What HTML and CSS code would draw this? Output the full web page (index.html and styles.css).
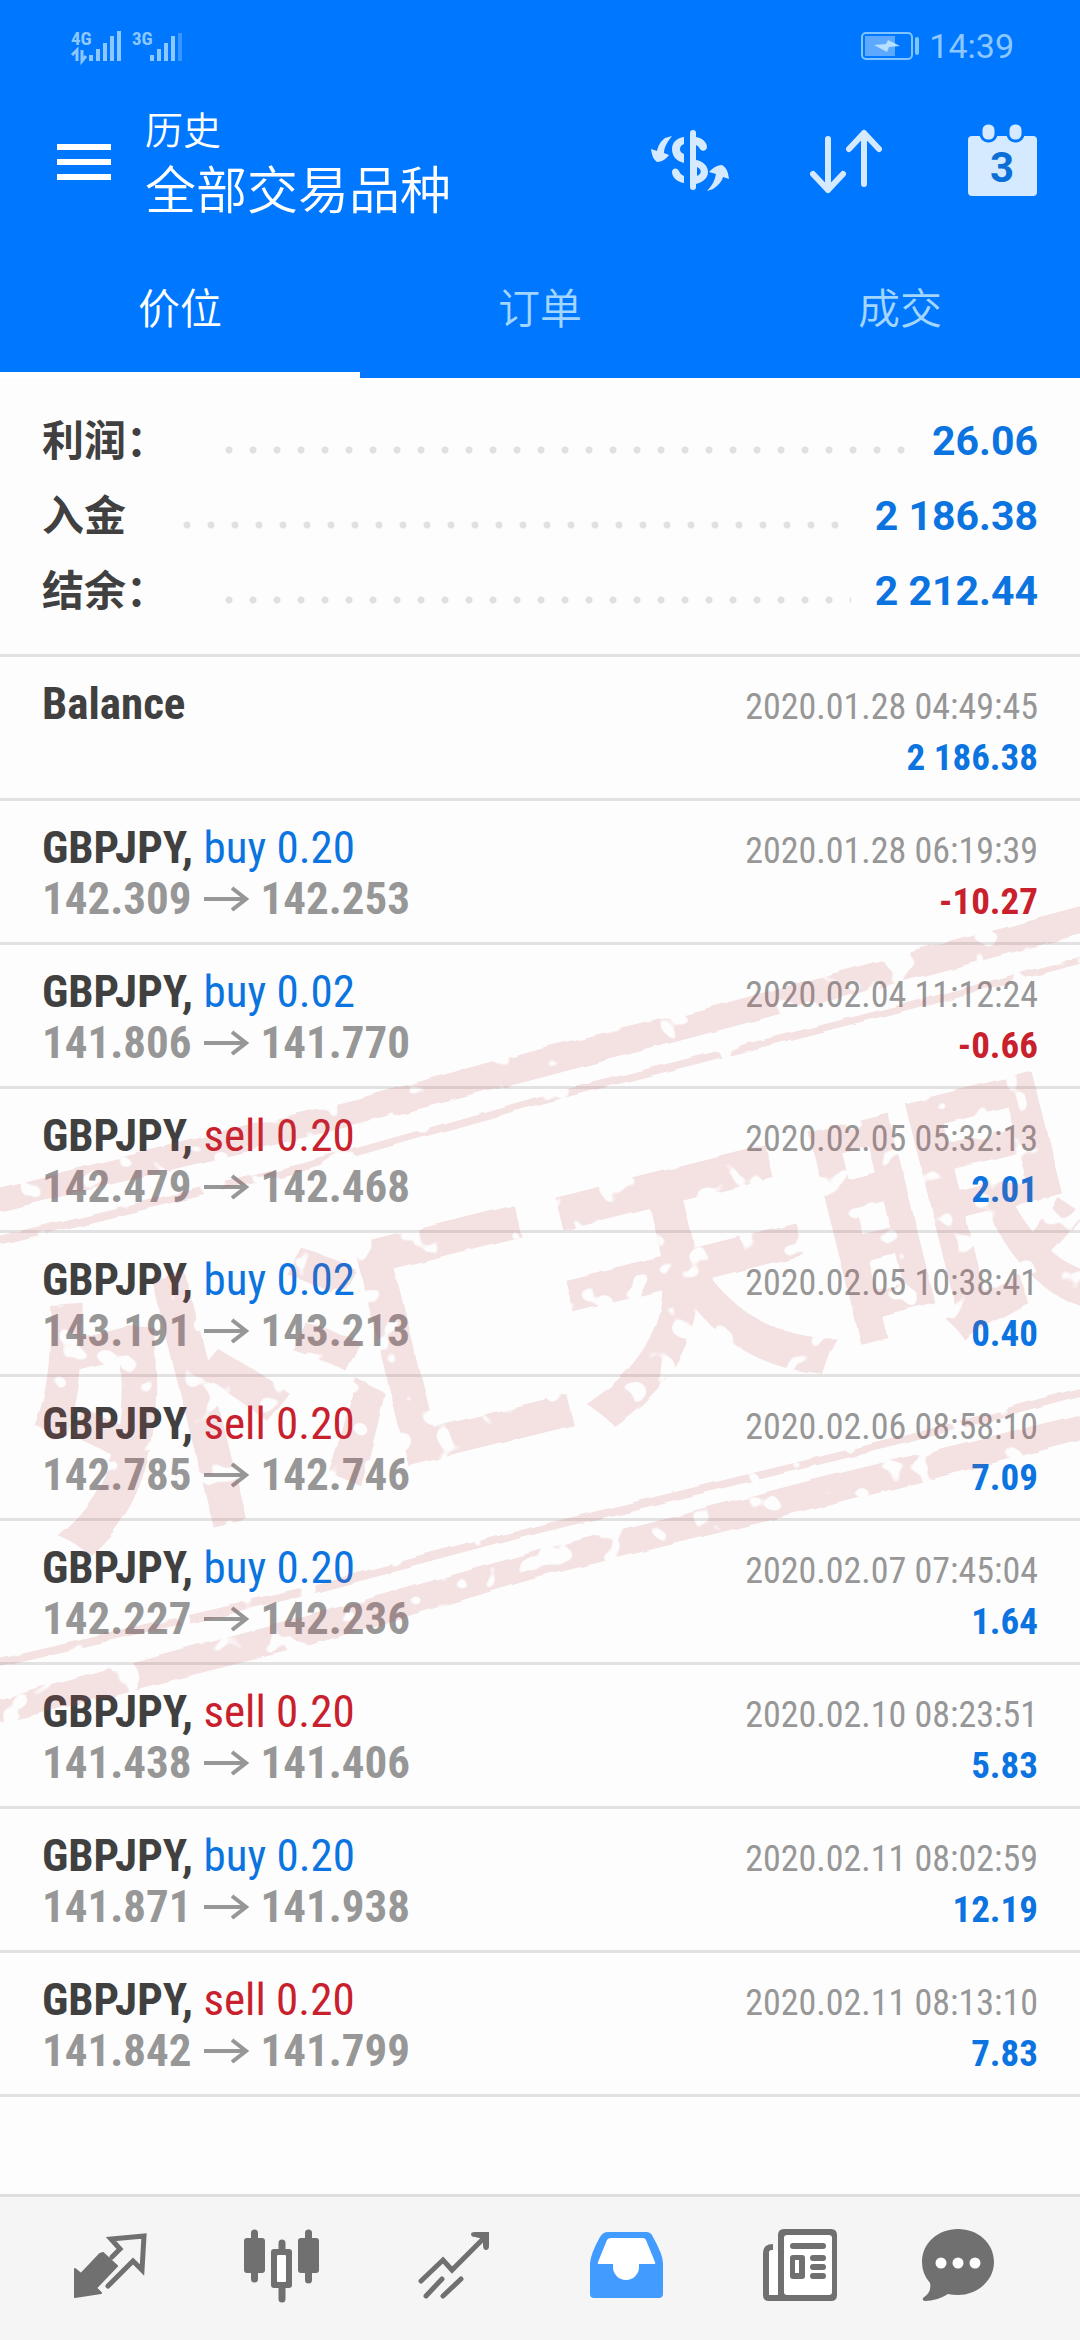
FILE: index.html
```
<!DOCTYPE html>
<html lang="zh-CN">
<head>
    <meta charset="UTF-8">
    <meta name="viewport" content="width=device-width, initial-scale=1.0">
    <title>历史</title>
    <link rel="stylesheet" href="styles.css">
</head>
<body>
    <header class="header">
        <div class="status-bar">
            <svg class="signal" viewBox="0 0 115 34">
                <text x="1" y="16">4G</text>
                <text x="62" y="16">3G</text>
                <path d="M2 26l5-5v11M12 21v11l4-5"/>
                <path class="bars" d="M21 26v6M28 20v12M35 14v18M42 7v25M49 2v30M82 26v6M89 20v12M96 14v18M103 7v25"/>
                <path class="bars dim" d="M110 4v28"/>
            </svg>
            <div class="status-right">
                <svg class="battery" viewBox="0 0 62 32">
                    <rect x="3" y="3" width="50" height="26" rx="4" fill="none" stroke="#80c4ff" stroke-width="2"/>
                    <rect x="6" y="6" width="30" height="20" fill="#5ca9ff"/>
                    <path d="M15 15l12-1 2-4 12 6-11 1-2 5z" fill="#b5e0ff"/>
                    <rect x="56" y="7" width="4" height="18" rx="2" fill="#80c4ff"/>
                </svg>
                <span class="clock">14:39</span>
            </div>
        </div>

        <div class="toolbar">
            <button class="icon-btn" aria-label="菜单">
                <svg class="menu-icon" viewBox="0 0 54 40"><path d="M0 7h54M0 22h54M0 37h54" stroke="#fff" stroke-width="6"/></svg>
            </button>
            <div class="titles">
                <div class="subtitle">历史</div>
                <h1 class="title">全部交易品种</h1>
            </div>
            <div class="actions">
                <button class="icon-btn" aria-label="货币">
                    <svg viewBox="0 0 80 80">
                        <rect x="42" y="10" width="6" height="60" rx="3"/>
                        <path d="M36 17C28 18 24 23 24 29C24 36 28 41 36 43V34C33 33 32 31 32 29C32 27 33 25 36 24zM48 17C54 18 59 22 59 27C59 31 54 32 52 29C51 27 50 26 48 25z"/>
                        <path fill-rule="evenodd" d="M48 40C55 41 60 46 60 52C60 58 55 62 48 64zM49 47V56C54 54 54 49 49 47zM36 63C29 62 24 57 24 52C24 48 29 47 31 51C32 53 33 55 36 56z"/>
                        <path d="M24 16L17 18C12 22 10 26 9 31L3 29C4 35 5 39 9 42C14 42 18 39 21 35L16 33C16 27 20 21 24 16z"/>
                        <path d="M59 71L65 69C71 65 74 61 75 57L81 59C80 52 79 48 74 45C69 45 65 48 61 52L68 54C67 60 64 66 59 71z"/>
                    </svg>
                </button>
                <button class="icon-btn" aria-label="排序">
                    <svg viewBox="0 0 80 80">
                        <path class="stroke" d="M24 19v51M9 54l15 16l15-16M60 64V13M45 29l15-16l15 16"/>
                    </svg>
                </button>
                <button class="icon-btn" aria-label="日期">
                    <svg viewBox="0 0 80 80">
                        <rect x="8" y="16" width="69" height="60" rx="4"/>
                        <rect class="ring" x="21" y="3" width="15" height="18" rx="7"/>
                        <rect class="ring" x="48" y="3" width="15" height="18" rx="7"/>
                        <text x="42" y="62">3</text>
                    </svg>
                </button>
            </div>
        </div>

        <nav class="tabs">
            <button class="tab active">价位</button>
            <button class="tab">订单</button>
            <button class="tab">成交</button>
        </nav>
    </header>

    <main>
        <section class="summary">
            <div class="summary-row"><span class="label">利润：</span><span class="dots"></span><span class="value">26.06</span></div>
            <div class="summary-row"><span class="label">入金</span><span class="dots"></span><span class="value">2 186.38</span></div>
            <div class="summary-row"><span class="label">结余：</span><span class="dots"></span><span class="value">2 212.44</span></div>
        </section>

        <section class="history">
            <ul class="deals" id="deals">
                <li class="deal">
                    <div class="line"><span class="name">Balance</span><span class="date">2020.01.28 04:49:45</span></div>
                    <div class="line"><span class="prices"></span><span class="amount">2 186.38</span></div>
                </li>
            </ul>

            <!-- Stamp over the list -->
            <svg class="stamp" viewBox="0 657 1080 1440">
                <defs>
                    <filter id="rough" x="0" y="0" width="1" height="1">
                        <feTurbulence type="fractalNoise" baseFrequency="0.03" numOctaves="2" seed="7" result="n"/>
                        <feDisplacementMap in="SourceGraphic" in2="n" scale="6" result="d"/>
                        <feTurbulence type="fractalNoise" baseFrequency="0.035" numOctaves="2" seed="12"/>
                        <feColorMatrix values="0 0 0 0 0  0 0 0 0 0  0 0 0 0 0  0 0 0 -22 15"/>
                        <feComposite in="d" operator="in"/>
                    </filter>
                </defs>
                <g filter="url(#rough)">
                    <rect x="0" y="657" width="1080" height="1440" fill="none"/>
                    <path d="M-10 1190L360 1098L540 1048L700 1010L900 955L1090 905V932L900 982L540 1078L360 1124L-10 1214z"/>
                    <path d="M-10 1238L300 1164L540 1096L900 1005L1090 954V961L900 1012L540 1104L300 1172L-10 1247z"/>
                    <path d="M-10 1660L300 1588L540 1525L900 1437L1090 1385V1393L900 1445L540 1533L300 1597L-10 1668z"/>
                    <path d="M-10 1702L300 1618L540 1550L820 1478L1090 1412V1438L820 1508L540 1577L300 1648L-10 1726z"/>
                    <text x="556" y="1414" transform="rotate(-14 556 1314)">外汇天眼</text>
                </g>
            </svg>
        </section>
    </main>

    <nav class="bottom-nav">
        <a href="#" aria-label="行情">
            <svg viewBox="0 0 96 96">
                <path d="M41 36L55 49L34 71L39 76L13 80V52L19 57L38 37z" stroke="#707070" stroke-width="2" stroke-linejoin="round"/>
                <path class="outline" stroke-width="5" d="M50 40L58 32L49 22L82 19L80 53L71 44L46 69"/>
            </svg>
        </a>
        <a href="#" aria-label="图表">
            <svg viewBox="0 0 96 96">
                <rect x="10" y="21" width="21" height="35" rx="3"/>
                <rect x="64" y="21" width="21" height="35" rx="3"/>
                <path class="outline" stroke-width="7" d="M20.500 16v46M74.500 16v47M48 26v56"/>
                <rect x="37" y="32" width="21" height="39" rx="3"/>
                <rect x="43" y="38" width="9" height="27" rx="1" fill="#fff"/>
            </svg>
        </a>
        <a href="#" aria-label="交易">
            <svg viewBox="0 0 96 96">
                <path class="outline" stroke-width="5" d="M15 64L37 43L46 53L80 19M20 79L36 62M37 79L55 62"/>
                <path d="M69 15H83V29Q83 33 80 33Q77 33 77 28V22L69 20Q65 20 65 17Q65 15 69 15z"/>
            </svg>
        </a>
        <a href="#" class="current" aria-label="历史">
            <svg viewBox="0 0 96 96">
                <path d="M30 15H68Q73 15 75 20Q85 38 85 46V77Q85 81 81 81H16Q12 81 12 77V46Q13 36 22 20Q25 15 30 15z"/>
                <path d="M33 21H65Q67 21 68 23L77 45Q78 47 76 47H61V50A13 13 0 0 1 35 50V47H21Q19 47 20 45L29 23Q30 21 33 21z" fill="#fff"/>
            </svg>
        </a>
        <a href="#" aria-label="新闻">
            <svg viewBox="0 0 96 96">
                <path d="M23 27Q13 27 13 36V78Q13 84 19 84H81Q87 84 87 78V18Q87 12 81 12H34Q28 12 28 18V78H19V36Q19 33 23 33z"/>
                <rect x="34" y="18" width="48" height="60" rx="3" fill="#fff"/>
                <rect x="19" y="33" width="9" height="45" rx="3" fill="#fff"/>
                <path class="outline" stroke-width="6" d="M43 29h30M63 41h10M63 50h10M63 59h10"/>
                <rect x="40" y="38" width="15" height="24" rx="3"/>
                <rect x="45" y="43" width="4" height="13" fill="#fff"/>
            </svg>
        </a>
        <a href="#" aria-label="消息">
            <svg viewBox="0 0 96 96">
                <path d="M36 12C56 12 72 26 72 45C72 63 56 78 36 78Q30 78 26 77Q15 84 3 84Q0 84 1 81Q10 75 8 66Q0 57 0 45C0 26 16 12 36 12z"/>
                <circle cx="19" cy="46" r="5.500" fill="#fff"/>
                <circle cx="36" cy="46" r="5.500" fill="#fff"/>
                <circle cx="53" cy="46" r="5.500" fill="#fff"/>
            </svg>
        </a>
    </nav>

    <script src="script.js"></script>
</body>
</html>
```

FILE: styles.css
```
* {
    box-sizing: border-box;
}

body {
    margin: 0;
    min-height: 100vh;
    display: flex;
    flex-direction: column;
    background-color: #fdfdfd;
    color: #404040;
    font-family: Roboto, "Noto Sans CJK SC", sans-serif;
}

button {
    background: none;
    border: none;
    padding: 0;
    font-family: inherit;
    cursor: pointer;
}

svg {
    display: block;
}

/* Header */
.header {
    background-color: #0077ff;
    color: #fff;
}

.status-bar {
    height: 92px;
    padding: 0 66px 0 70px;
    display: flex;
    align-items: center;
    justify-content: space-between;
}

.signal {
    width: 115px;
    height: 34px;
    overflow: visible;
}

.signal text {
    font-family: "Roboto Condensed", Roboto, sans-serif;
    font-size: 19px;
    font-weight: 700;
    fill: #8cc8ff;
}

.signal path {
    fill: none;
    stroke: #8cc8ff;
    stroke-width: 3;
}

.signal .bars {
    stroke-width: 4;
}

.signal .dim {
    opacity: 0.4;
}

.status-right {
    display: flex;
    align-items: center;
    gap: 8px;
}

.battery {
    width: 62px;
    height: 32px;
}

.clock {
    font-size: 34px;
    color: #8cc8ff;
}

.toolbar {
    height: 136px;
    padding: 0 40px 0 57px;
    display: flex;
    align-items: center;
}

.menu-icon {
    width: 54px;
    height: 40px;
}

.titles {
    flex: 1;
    padding: 4px 0 0 34px;
}

.subtitle {
    font-size: 38px;
    line-height: 60px;
    font-weight: 350;
}

.title {
    margin: 0;
    font-size: 51px;
    line-height: 62px;
    font-weight: 350;
}

.actions {
    display: flex;
    gap: 76px;
}

.actions svg {
    width: 80px;
    height: 80px;
    overflow: visible;
    fill: #d5e9ff;
}

.actions .stroke {
    fill: none;
    stroke: #d5e9ff;
    stroke-width: 6;
    stroke-linecap: round;
    stroke-linejoin: round;
}

.actions .ring {
    stroke: #0077ff;
    stroke-width: 3;
}

.actions text {
    font-size: 42px;
    font-weight: 700;
    text-anchor: middle;
    fill: #0b6fd8;
}

.tabs {
    display: flex;
}

.tab {
    flex: 1;
    height: 150px;
    padding-top: 10px;
    border-bottom: 6px solid transparent;
    color: #a3d6ff;
    font-size: 42px;
    font-weight: 350;
}

.tab.active {
    color: #fff;
    border-bottom-color: #fff;
}

/* Totals */
main {
    flex: 1;
}

.summary {
    padding: 26px 42px 25px;
    border-bottom: 3px solid #e2e2e2;
}

.summary-row {
    display: flex;
    height: 75px;
    line-height: 75px;
    font-size: 42px;
    font-weight: 700;
}

.dots {
    flex: 1;
    margin: 0 24px 0 57px;
    background: radial-gradient(circle at 4px 46px, #e0e0e0 3px, transparent 4px) 0 0 / 24px 75px repeat-x;
}

.value {
    font-size: 41px;
    color: #0b74e0;
}

/* Deals */
.history {
    position: relative;
    overflow: hidden;
}

.deals {
    list-style: none;
    margin: 0;
    padding: 0;
    font-family: "Roboto Condensed", Roboto, sans-serif;
}

.deal {
    height: 144px;
    padding: 21px 42px 0;
    border-bottom: 3px solid #e2e2e2;
}

.line {
    display: flex;
    justify-content: space-between;
    align-items: baseline;
    height: 51px;
    line-height: 51px;
}

.name {
    font-size: 45px;
    font-weight: 700;
}

.side {
    font-weight: 400;
}

.buy {
    color: #0b74e0;
}

.sell {
    color: #c8202c;
}

.prices {
    display: flex;
    align-items: center;
    gap: 12px;
    font-size: 45px;
    font-weight: 700;
    color: #979797;
}

.prices:empty {
    visibility: hidden;
}

.prices:empty::before {
    content: "0";
}

.arrow {
    width: 45px;
    height: 26px;
    fill: none;
    stroke: #979797;
    stroke-width: 4;
}

.date {
    font-size: 36px;
    color: #979797;
}

.amount {
    font-size: 37px;
    font-weight: 700;
    color: #0b74e0;
}

.amount.loss {
    color: #c8202c;
}

.stamp {
    position: absolute;
    top: 0;
    left: 0;
    width: 100%;
    pointer-events: none;
    fill: #c34650;
    opacity: 0.15;
}

.stamp text {
    font-family: "Noto Sans CJK SC", sans-serif;
    font-size: 272px;
    font-weight: 700;
    text-anchor: middle;
}

/* Bottom navigation */
.bottom-nav {
    display: flex;
    justify-content: space-between;
    padding: 20px 62px 27px;
    border-top: 3px solid #dedede;
    background-color: #f5f5f6;
}

.bottom-nav svg {
    width: 96px;
    height: 96px;
    fill: #707070;
}

.bottom-nav .outline {
    fill: none;
    stroke: #707070;
    stroke-linecap: round;
}

.bottom-nav .current svg {
    fill: #429bff;
}
```

FILE: script.js
```
const deals = [
    ['buy', '0.20', '142.309', '142.253', '2020.01.28 06:19:39', '-10.27'],
    ['buy', '0.02', '141.806', '141.770', '2020.02.04 11:12:24', '-0.66'],
    ['sell', '0.20', '142.479', '142.468', '2020.02.05 05:32:13', '2.01'],
    ['buy', '0.02', '143.191', '143.213', '2020.02.05 10:38:41', '0.40'],
    ['sell', '0.20', '142.785', '142.746', '2020.02.06 08:58:10', '7.09'],
    ['buy', '0.20', '142.227', '142.236', '2020.02.07 07:45:04', '1.64'],
    ['sell', '0.20', '141.438', '141.406', '2020.02.10 08:23:51', '5.83'],
    ['buy', '0.20', '141.871', '141.938', '2020.02.11 08:02:59', '12.19'],
    ['sell', '0.20', '141.842', '141.799', '2020.02.11 08:13:10', '7.83']
];

const list = document.getElementById('deals');

deals.forEach(([side, volume, open, close, date, profit]) => {
    const loss = profit.startsWith('-') ? ' loss' : '';
    list.insertAdjacentHTML('beforeend', `
        <li class="deal">
            <div class="line">
                <span class="name">GBPJPY, <span class="side ${side}">${side} ${volume}</span></span>
                <span class="date">${date}</span>
            </div>
            <div class="line">
                <span class="prices">
                    <span>${open}</span>
                    <svg class="arrow" viewBox="0 0 45 26"><path d="M0 13h42M28 2l14 11l-14 11"/></svg>
                    <span>${close}</span>
                </span>
                <span class="amount${loss}">${profit}</span>
            </div>
        </li>`);
});
```
